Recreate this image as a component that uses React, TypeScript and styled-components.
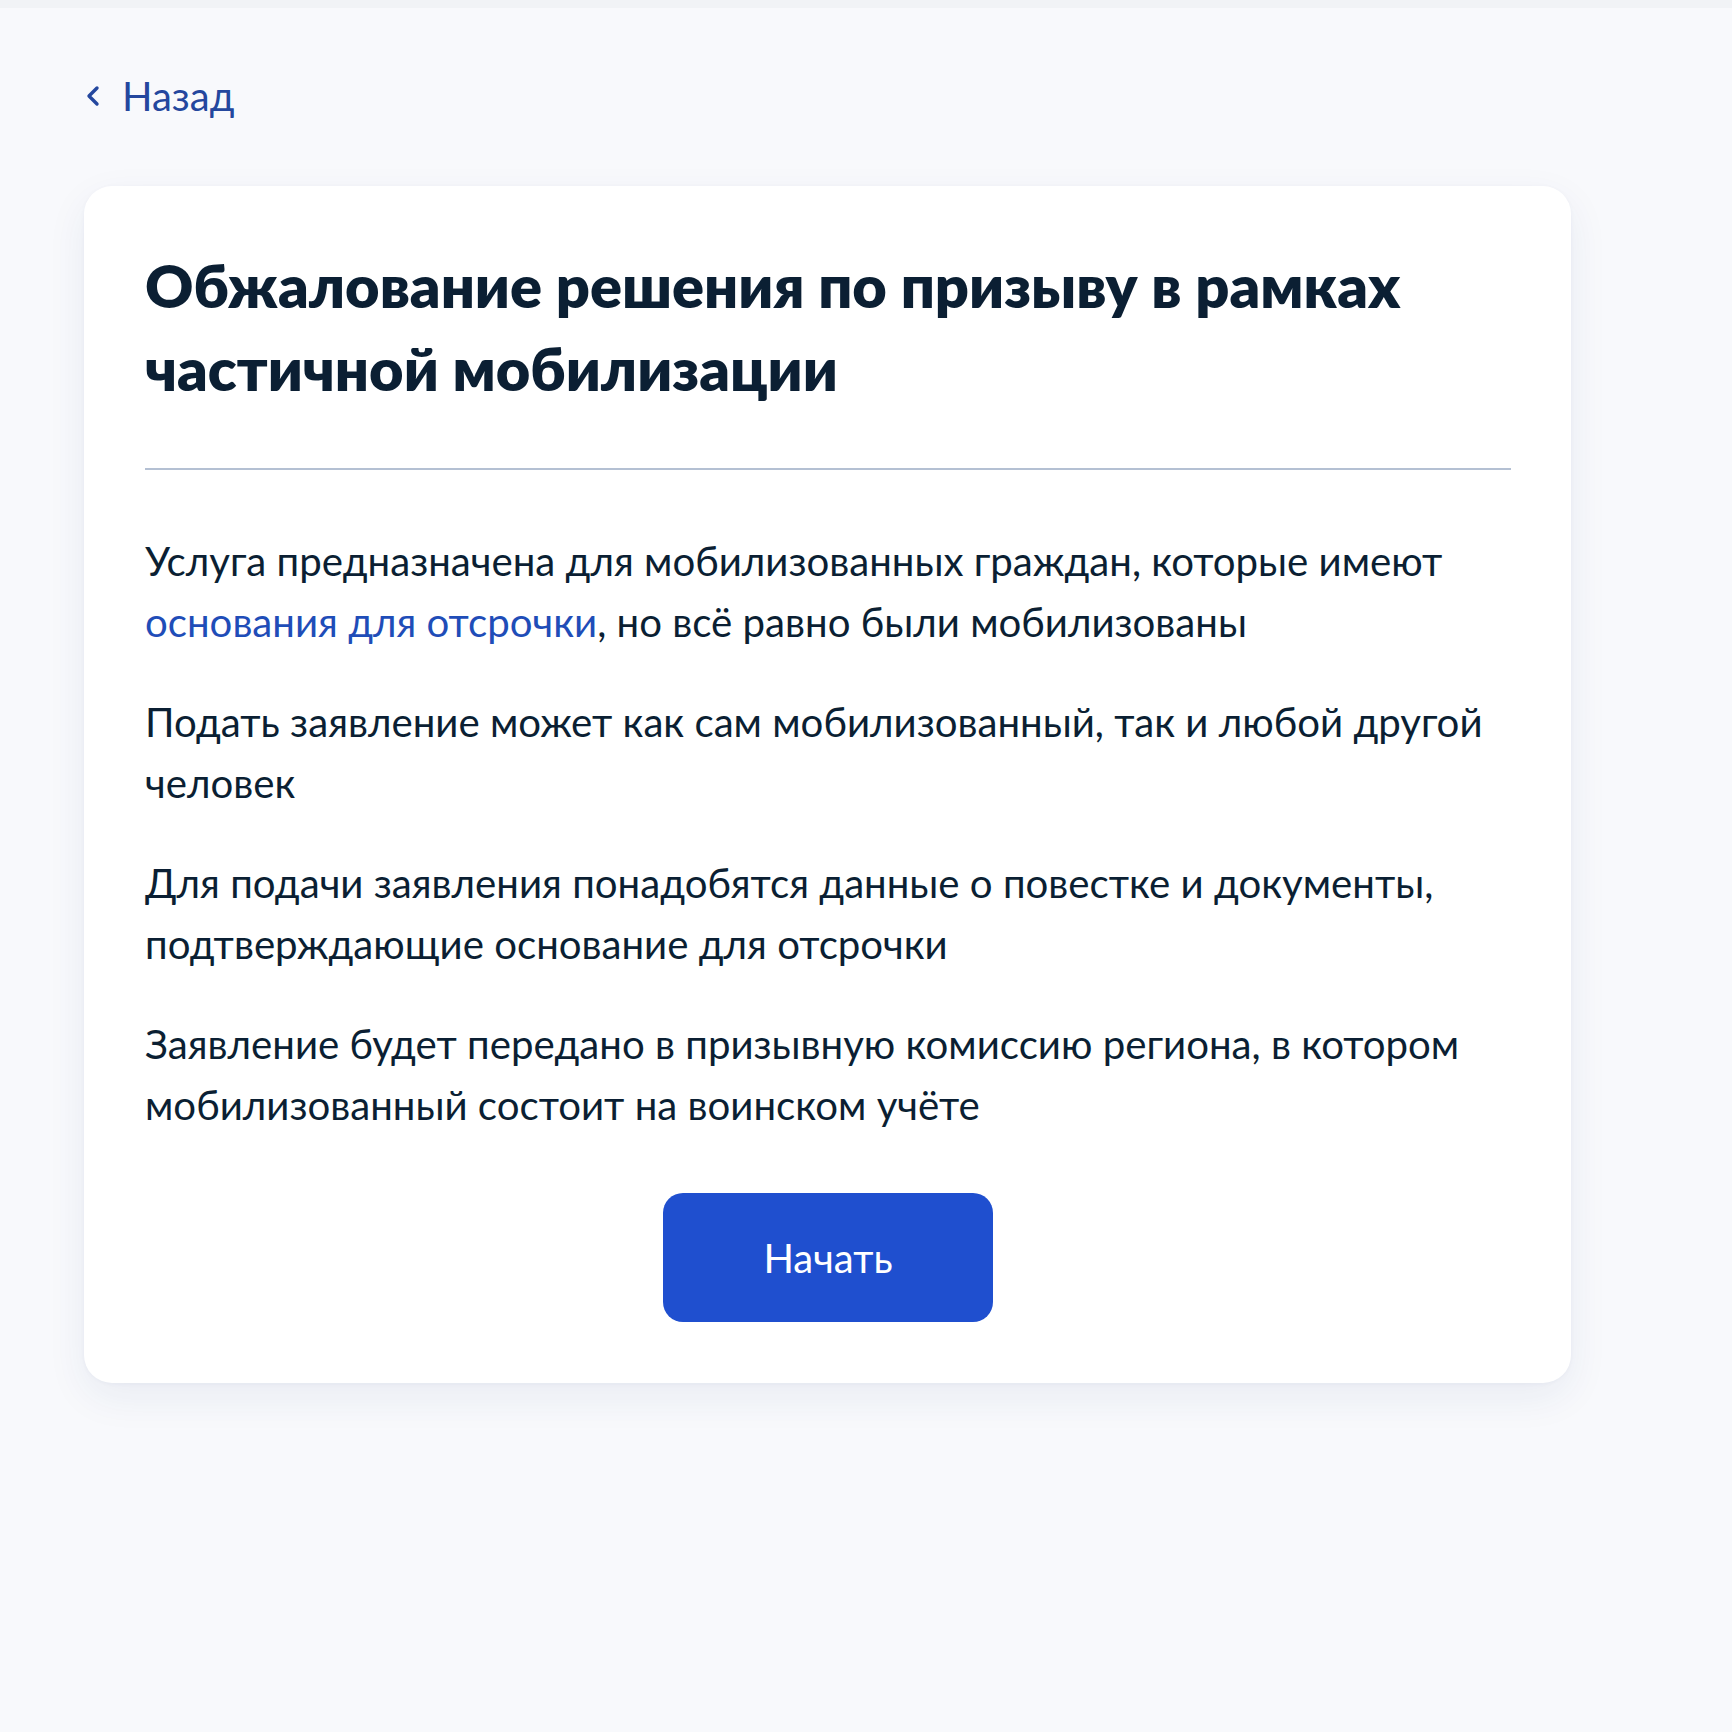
import styled, { createGlobalStyle } from "styled-components";

const GlobalStyle = createGlobalStyle`
  html, body {
    margin: 0;
    padding: 0;
    background: #f8f9fc;
  }
  body {
    font-family: Lato, "Noto Sans", "Liberation Sans", sans-serif;
    color: #0b1f33;
    -webkit-font-smoothing: antialiased;
  }
`;

const paragraphs = [
  "Подать заявление может как сам мобилизованный, так и любой другой человек",
  "Для подачи заявления понадобятся данные о повестке и документы, подтверждающие основание для отсрочки",
  "Заявление будет передано в призывную комиссию региона, в котором мобилизованный состоит на воинском учёте",
];

const App = () => {
  return (
    <>
      <GlobalStyle />
      <Page>
        <BackLink href="#">
          <svg width="18" height="26" viewBox="0 0 18 26" fill="none">
            <path
              d="M13 5L5 13l8 8"
              stroke="currentColor"
              strokeWidth="3.4"
              strokeLinecap="round"
              strokeLinejoin="round"
            />
          </svg>
          <span>Назад</span>
        </BackLink>

        <Card>
          <Title>Обжалование решения по призыву в рамках частичной мобилизации</Title>
          <Divider />
          <Text>
            <Paragraph>
              Услуга предназначена для мобилизованных граждан, которые имеют{" "}
              <Link href="#">основания для отсрочки</Link>, но всё равно были
              мобилизованы
            </Paragraph>
            {paragraphs.map((p) => (
              <Paragraph key={p}>{p}</Paragraph>
            ))}
          </Text>
          <Actions>
            <StartButton type="button">Начать</StartButton>
          </Actions>
        </Card>
      </Page>
    </>
  );
};

export default App;

const Page = styled.div`
  min-height: 1732px;
  box-sizing: border-box;
  border-top: 8px solid #f1f3f6;
  padding: 52px 161px 0 84px;
  display: flex;
  flex-direction: column;
  align-items: flex-start;
`;

const BackLink = styled.a`
  display: flex;
  align-items: center;
  gap: 20px;
  color: #24479e;
  text-decoration: none;
  font-size: 40px;
  line-height: 72px;

  svg {
    flex-shrink: 0;
  }
`;

const Card = styled.div`
  margin-top: 54px;
  width: 100%;
  box-sizing: border-box;
  background: #ffffff;
  border-radius: 28px;
  box-shadow: 0 14px 40px rgba(30, 60, 120, 0.07), 0 1px 4px rgba(30, 60, 120, 0.04);
  padding: 58px 60px 61px 61px;
`;

const Title = styled.h1`
  margin: 0;
  font-size: 59.5px;
  font-weight: 800;
  line-height: 83px;
  color: #0b1f33;
`;

const Divider = styled.hr`
  margin: 58px 0 0;
  border: none;
  border-top: 2px solid #b4c0d3;
`;

const Text = styled.div`
  margin-top: 60px;
  display: flex;
  flex-direction: column;
  gap: 39px;
`;

const Paragraph = styled.p`
  margin: 0;
  font-size: 40.2px;
  line-height: 61px;
  color: #0b1f33;
`;

const Link = styled.a`
  color: #1f4db8;
  text-decoration: none;
`;

const Actions = styled.div`
  margin-top: 58px;
  display: flex;
  justify-content: center;
`;

const StartButton = styled.button`
  width: 330px;
  height: 129px;
  border: none;
  border-radius: 20px;
  background: #1f4fcf;
  color: #ffffff;
  font-family: Lato, "Noto Sans", sans-serif;
  font-size: 40px;
  cursor: pointer;
`;
